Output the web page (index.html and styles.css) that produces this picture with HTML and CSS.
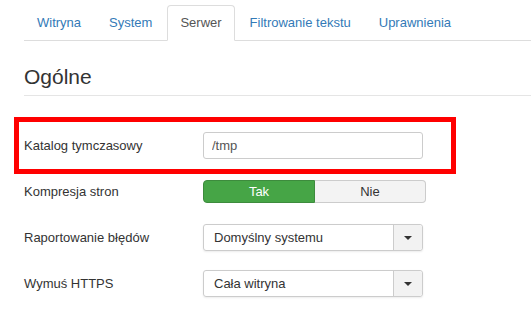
FILE: index.html
```html
<!DOCTYPE html>
<html lang="pl">
<head>
  <meta charset="UTF-8">
  <title>Konfiguracja globalna - Serwer</title>
  <link rel="stylesheet" href="styles.css">
</head>
<body>

<div class="page">
  <ul class="tabs">
    <li><a href="#">Witryna</a></li>
    <li><a href="#">System</a></li>
    <li class="active"><a href="#">Serwer</a></li>
    <li><a href="#">Filtrowanie tekstu</a></li>
    <li><a href="#">Uprawnienia</a></li>
  </ul>

  <h2 class="legend">Ogólne</h2>

  <div class="form">
    <div class="row marked">
      <label>Katalog tymczasowy</label>
      <input class="field" value="/tmp">
    </div>

    <div class="row">
      <label>Kompresja stron</label>
      <div class="toggle">
        <span class="opt yes">Tak</span>
        <span class="opt no">Nie</span>
      </div>
    </div>

    <div class="row">
      <label>Raportowanie błędów</label>
      <div class="select">
        <span class="value">Domyślny systemu</span>
        <span class="caret-box"><span class="caret"></span></span>
      </div>
    </div>

    <div class="row">
      <label>Wymuś HTTPS</label>
      <div class="select">
        <span class="value">Cała witryna</span>
        <span class="caret-box"><span class="caret"></span></span>
      </div>
    </div>
  </div>
</div>

</body>
</html>
```

FILE: styles.css
```css
body {
  margin: 0;
  background: #fff;
  font-family: "Liberation Sans", Arial, sans-serif;
  font-size: 13px;
  color: #333;
}
.page { padding: 5px 0 0 24px; }

/* tabs */
.tabs {
  display: flex;
  list-style: none;
  margin: 0;
  padding: 0;
  border-bottom: 1px solid #ddd;
}
.tabs li { margin: 0 2px -1px 0; }
.tabs a {
  display: block;
  padding: 8px 12px;
  line-height: 18px;
  border: 1px solid transparent;
  border-radius: 4px 4px 0 0;
  color: #337ab7;
  text-decoration: none;
}
.tabs .active a {
  color: #555;
  background: #fff;
  border-color: #ddd #ddd transparent;
}

.legend {
  margin: 17px 0 0;
  font-size: 21px;
  font-weight: normal;
  line-height: 37px;
  color: #333;
  border-bottom: 1px solid #e5e5e5;
}

/* form rows */
.form { margin-top: 36px; }
.row {
  display: flex;
  align-items: center;
  height: 27px;
  margin-bottom: 19px;
}
.row label { width: 179px; }
.marked { position: relative; }
.marked::after {
  content: "";
  position: absolute;
  left: -10px;
  top: -15px;
  width: 442px;
  height: 57px;
  box-sizing: border-box;
  border: 5px solid #f00;
}

.field {
  box-sizing: border-box;
  width: 220px;
  height: 27px;
  padding: 4px 8px;
  border: 1px solid #ccc;
  border-radius: 3px;
  font: inherit;
  color: #555;
}

.toggle {
  display: flex;
  width: 223px;
  height: 23px;
}
.opt {
  flex: 1;
  text-align: center;
  line-height: 21px;
  border: 1px solid #ccc;
}
.opt.yes {
  background: #46a546;
  border-color: #3d8b3d;
  color: #fff;
  border-radius: 4px 0 0 4px;
}
.opt.no {
  background: #f3f3f3;
  border-left: none;
  border-radius: 0 4px 4px 0;
}

.select {
  display: flex;
  box-sizing: border-box;
  width: 220px;
  height: 27px;
  border: 1px solid #ccc;
  border-radius: 3px;
  box-shadow: 0 1px 2px rgba(0,0,0,0.08);
}
.select .value {
  flex: 1;
  padding-left: 10px;
  line-height: 25px;
}
.caret-box {
  width: 28px;
  border-left: 1px solid #ccc;
  background: #f2f2f2;
  border-radius: 0 3px 3px 0;
  display: flex;
  align-items: center;
  justify-content: center;
}
.caret {
  width: 0;
  height: 0;
  border-left: 4px solid transparent;
  border-right: 4px solid transparent;
  border-top: 4px solid #333;
}
```
